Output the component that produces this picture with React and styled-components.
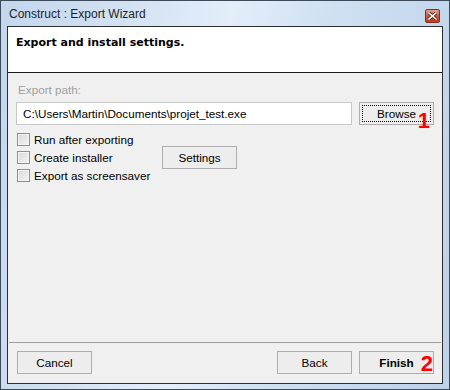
import React from "react";
import styled, { createGlobalStyle } from "styled-components";

const GlobalStyle = createGlobalStyle`
  html, body {
    margin: 0;
    padding: 0;
    background: #ffffff;
  }
  body {
    font-family: "Liberation Sans", Arial, sans-serif;
    font-size: 11.7px;
    color: #000;
  }
`;

function App() {
  return (
    <>
      <GlobalStyle />
      <Window>
        <TitleBar>
          <Title>Construct : Export Wizard</Title>
          <CloseButton>
            <svg width="9" height="8" viewBox="0 0 9 8">
              <path
                d="M1 1 L8 7 M8 1 L1 7"
                stroke="#4a1a12"
                strokeWidth="3.2"
                strokeLinecap="square"
              />
              <path
                d="M1 1 L8 7 M8 1 L1 7"
                stroke="#ffffff"
                strokeWidth="1.6"
                strokeLinecap="square"
              />
            </svg>
          </CloseButton>
        </TitleBar>
        <Client>
          <Header>
            <HeaderText>Export and install settings.</HeaderText>
          </Header>
          <Body>
            <FieldLabel>Export path:</FieldLabel>
            <PathRow>
              <TextBox>C:\Users\Martin\Documents\projet_test.exe</TextBox>
              <Button $focused>
                Browse
                <Marker $right="3px" $top="10px">1</Marker>
              </Button>
            </PathRow>
            <Options>
              <CheckList>
                {["Run after exporting", "Create installer", "Export as screensaver"].map(
                  (label) => (
                    <CheckRow key={label}>
                      <CheckBox />
                      <span>{label}</span>
                    </CheckRow>
                  )
                )}
              </CheckList>
              <Button>Settings</Button>
            </Options>
          </Body>
          <Footer>
            <Button>Cancel</Button>
            <FooterRight>
              <Button>Back</Button>
              <Button $primary>
                Finish
                <Marker $right="0px" $top="4px">2</Marker>
              </Button>
            </FooterRight>
          </Footer>
        </Client>
      </Window>
    </>
  );
}

const Window = styled.div`
  width: 450px;
  height: 390px;
  box-sizing: border-box;
  border: 1px solid #3c4a5a;
  padding: 0 6px 5px 6px;
  display: flex;
  flex-direction: column;
  background: linear-gradient(
    100deg,
    #c3d6ec 0%,
    #d3e2f2 25%,
    #e3eef9 45%,
    #cfe0f2 65%,
    #bcd2ea 100%
  );
`;

const TitleBar = styled.div`
  height: 25px;
  display: flex;
  align-items: center;
  justify-content: space-between;
  padding-left: 2px;
  padding-right: 3px;
`;

const Title = styled.span`
  font-size: 12px;
  color: #1e1e1e;
  margin-top: 1px;
`;

const CloseButton = styled.div`
  width: 15px;
  height: 14px;
  margin-top: 4px;
  box-sizing: border-box;
  border: 1px solid #7a3024;
  border-radius: 2px;
  background: linear-gradient(to bottom, #e8a08a 0%, #d3583e 50%, #c13b22 100%);
  display: flex;
  align-items: center;
  justify-content: center;
`;

const Client = styled.div`
  flex: 1;
  display: flex;
  flex-direction: column;
  border: 1px solid #2e2e2e;
  background: #f0f0f0;
`;

const Header = styled.div`
  height: 46px;
  box-sizing: border-box;
  background: #ffffff;
  border-bottom: 1px solid #1a1a1a;
  padding: 9px 8px 0 8px;
`;

const HeaderText = styled.div`
  font-family: "DejaVu Sans", Verdana, sans-serif;
  font-weight: bold;
  font-size: 11px;
  color: #000;
`;

const Body = styled.div`
  flex: 1;
  padding: 9px 8px 0 8px;
  display: flex;
  flex-direction: column;
`;

const FieldLabel = styled.div`
  color: #a0a0a0;
  height: 15px;
  line-height: 15px;
  padding-left: 2px;
  margin-bottom: 5px;
`;

const PathRow = styled.div`
  display: flex;
  align-items: center;
  gap: 7px;
`;

const TextBox = styled.div`
  width: 336px;
  height: 23px;
  box-sizing: border-box;
  border: 1px solid #c8c8c8;
  background: #ffffff;
  padding-left: 6px;
  line-height: 21px;
  white-space: nowrap;
`;

const Button = styled.div`
  position: relative;
  width: 75px;
  height: 23px;
  box-sizing: border-box;
  border: 1px solid #adadad;
  background: #ededed;
  display: flex;
  align-items: center;
  justify-content: center;
  font-weight: ${(p) => (p.$primary ? "bold" : "normal")};
  color: #000;
  ${(p) =>
    p.$focused &&
    `
    &::before {
      content: "";
      position: absolute;
      inset: 2px;
      border: 1px dotted #000;
    }
  `}
`;

const Marker = styled.span`
  position: absolute;
  right: ${(p) => p.$right};
  top: ${(p) => p.$top};
  font-family: "Liberation Sans", Arial, sans-serif;
  font-weight: bold;
  font-size: 22px;
  line-height: 16px;
  color: #ff0000;
`;

const Options = styled.div`
  margin-top: 8px;
  display: flex;
  align-items: center;
`;

const CheckList = styled.div`
  width: 146px;
  display: flex;
  flex-direction: column;
  gap: 5px;
`;

const CheckRow = styled.div`
  display: flex;
  align-items: center;
  gap: 4px;
  height: 13px;
  padding-left: 1px;
`;

const CheckBox = styled.span`
  width: 13px;
  height: 13px;
  box-sizing: border-box;
  border: 1px solid #8e8f8f;
  background: linear-gradient(135deg, #d8d8d8 0%, #f4f4f4 100%);
  box-shadow: inset 0 0 0 1px #f4f4f4;
`;

const Footer = styled.div`
  height: 41px;
  box-sizing: border-box;
  border-top: 1px solid #a0a0a0;
  margin: 0 1px;
  padding: 8px 7px 0 8px;
  display: flex;
  justify-content: space-between;
  align-items: flex-start;
`;

const FooterRight = styled.div`
  display: flex;
  gap: 7px;
`;

export default App;
